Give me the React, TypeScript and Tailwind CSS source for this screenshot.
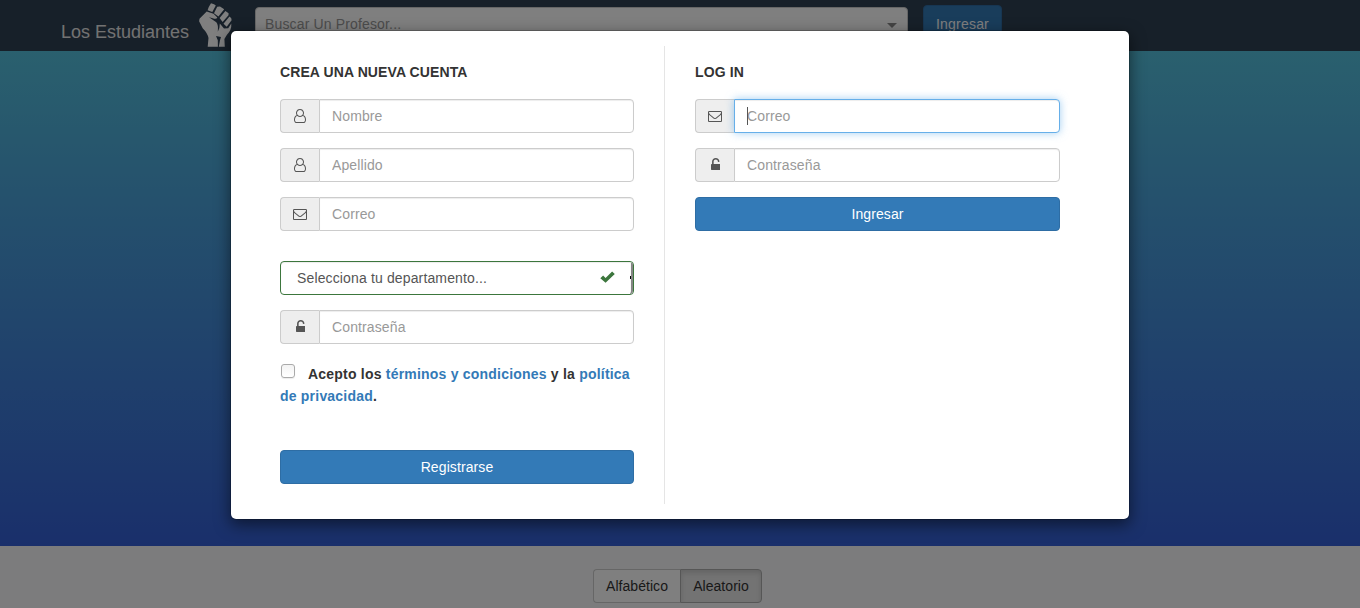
import React from "react";

const USER_PATH =
  "M1201 784q47 14 89.5 38t89 73 79.5 115.5 55 172 22 236.5q0 154-100 263.5t-241 109.5h-854q-141 0-241-109.5t-100-263.5q0-131 22-236.5t55-172 79.5-115.5 89-73 89.5-38q-79-125-79-272 0-104 40.5-198.5t109.5-163.5 163.5-109.5 198.5-40.5 198.5 40.5 163.5 109.5 109.5 163.5 40.5 198.5q0 147-79 272zm-433-656q-159 0-271.5 112.5t-112.5 271.5 112.5 271.5 271.5 112.5 271.5-112.5 112.5-271.5-112.5-271.5-271.5-112.5zm427 1536q88 0 150.5-71.5t62.5-173.5q0-239-78.5-377t-225.5-145q-145 127-336 127t-336-127q-147 7-225.5 145t-78.5 377q0 102 62.5 173.5t150.5 71.5h854z";
const MAIL_PATH =
  "M1664 1504v-768q-32 36-69 66-268 206-426 338-51 43-83 67t-86.5 48.5-102.5 24.5h-2q-48 0-102.5-24.5t-86.5-48.5-83-67q-158-132-426-338-37-30-69-66v768q0 13 9.5 22.5t22.5 9.5h1472q13 0 22.5-9.5t9.5-22.5zm0-1051v-24.5l-.5-13-3-12.5-5.5-9-9-7.5-14-2.5h-1472q-13 0-22.5 9.5t-9.5 22.5q0 168 147 284 193 152 401 317 6 5 35 29.5t46 37.5 44.5 31.5 50.5 27.5 43 9h2q20 0 43-9t50.5-27.5 44.5-31.5 46-37.5 35-29.5q208-165 401-317 54-43 100.5-115.5t46.5-131.5zm128-37v1088q0 66-47 113t-113 47h-1472q-66 0-113-47t-47-113v-1088q0-66 47-113t113-47h1472q66 0 113 47t47 113z";
const LOCK_PATH =
  "M1376 896q40 0 68 28t28 68v576q0 40-28 68t-68 28h-960q-40 0-68-28t-28-68v-576q0-40 28-68t68-28h32v-320q0-185 131.5-316.5t316.5-131.5 316.5 131.5 131.5 316.5q0 26-19 45t-45 19h-64q-26 0-45-19t-19-45q0-106-75-181t-181-75-181 75-75 181v320h736z";

type IconName = "user" | "mail" | "lock";

function FieldIcon({ name }: { name: IconName }) {
  if (name === "user")
    return (
      <svg viewBox="0 0 1536 1792" className="h-[14px] w-3 fill-[#555]">
        <path d={USER_PATH} />
      </svg>
    );
  if (name === "mail")
    return (
      <svg viewBox="0 0 1792 1792" className="h-[14px] w-[14px] fill-[#555]">
        <path d={MAIL_PATH} />
      </svg>
    );
  return (
    <svg viewBox="320 128 1152 1536" preserveAspectRatio="none" className="mb-[2px] ml-px h-3 w-[9.5px] fill-[#555]">
      <path d={LOCK_PATH} />
    </svg>
  );
}

function Field({ icon, label, type = "text", active = false }: { icon: IconName; label: string; type?: string; active?: boolean }) {
  return (
    <div className="flex h-[34px]">
      <span className="flex w-[39px] shrink-0 items-center justify-center rounded-l-[4px] border border-r-0 border-[#ccc] bg-[#eee]">
        <FieldIcon name={icon} />
      </span>
      <div
        className={
          active
            ? "relative flex min-w-0 flex-1 items-center rounded-r-[4px] border border-[#66afe9] bg-white pl-3 shadow-[inset_0_1px_1px_rgba(0,0,0,0.075),0_0_8px_rgba(102,175,233,0.6)]"
            : "relative flex min-w-0 flex-1 items-center rounded-r-[4px] border border-[#ccc] bg-white pl-3 shadow-[inset_0_1px_1px_rgba(0,0,0,0.075)]"
        }
      >
        {active && <span className="absolute left-3 top-[7px] h-[18px] w-px bg-[#555]" />}
        <input type={type} placeholder={label} className="h-5 w-full min-w-0 bg-transparent leading-5 outline-none placeholder:text-[#999]" />
      </div>
    </div>
  );
}

function PrimaryButton({ children }: { children: React.ReactNode }) {
  return (
    <button className="h-[34px] w-full rounded-[4px] border border-[#2e6da4] bg-[#337ab7] text-center leading-5 tracking-[0.1px] text-white">
      {children}
    </button>
  );
}

function Fist() {
  return (
    <svg viewBox="0 0 50 50" className="h-[50px] w-[50px] shrink-0">
      <path
        fill="#fff"
        d="M21 3.2 24 4.3 25.8 5.4 22.3 12 17.6 10.3Q18.8 6.2 21 3.2ZM27.2 6.7 30 6.6 34.2 9.3 28.4 16.5 24 13.2ZM35.4 11 38.6 13.2 38.5 15.3 32.6 22 29.6 18ZM39.5 16.5Q42 18 41.6 20.2L36.7 26.8 33.5 23.7ZM16.7 11.5 23.5 13.8 27.3 17.5Q26.5 19.7 22.8 18.3L19 17.2 26.3 22.3Q28.5 24.5 27.8 31.7 30 27.5 29.8 23.4L34 28.4 38.2 28.2 41.3 23.5Q41.8 30 36.8 35L34.4 39 34.8 46.8H28.8L30 40.2 31 37.1 26 36 27.8 40.3 27.9 46.8H17.7L18.5 38Q17.5 33 12.7 28.2L9.1 21.2 9.5 18.7Z"
      />
    </svg>
  );
}

export default function App() {
  return (
    <div className="relative h-[608px] w-full overflow-hidden bg-[#f8f9fb] font-['Liberation_Sans',Arial,sans-serif] text-[14px] leading-5 text-[#333]">
      <header className="flex h-[51px] bg-[#2f4052] pl-[61px]">
        <span className="w-[129px] shrink-0 whitespace-nowrap pt-[22px] text-[18px] text-[#e4e4e4]">Los Estudiantes</span>
        <Fist />
        <div className="ml-[15px] mt-[7px] flex h-[34px] w-[653px] justify-between rounded-[4px] border border-[#ccc] bg-white px-[9px] pt-[6px] text-[#999]">
          <span className="tracking-[0.15px]">Buscar Un Profesor...</span>
          <span className="mr-px mt-[9px] h-0 w-0 border-x-[5px] border-t-[5px] border-x-transparent border-t-[#888]" />
        </div>
        <button className="ml-[15px] mt-[5px] h-[38px] w-[79px] rounded-[4px] border border-[#2e6da4] bg-[#337ab7] tracking-[0.2px] text-white">Ingresar</button>
      </header>
      <div className="h-[495px] bg-linear-to-b/srgb from-[#54c0dc] to-[#345fd6]" />
      <div className="flex justify-center pt-[23px]">
        <div className="flex h-[34px]">
          <button className="w-[87px] rounded-l-[4px] border border-r-0 border-[#ccc] bg-white tracking-[0.05px]">Alfabético</button>
          <button className="w-[82px] rounded-r-[4px] border border-[#adadad] bg-[#e6e6e6] tracking-[0.05px] shadow-[inset_0_3px_5px_rgba(0,0,0,0.125)]">Aleatorio</button>
        </div>
        <span className="w-[5px]" />
      </div>

      <div className="absolute inset-0 bg-black/50" />

      <div className="absolute left-[230px] top-[30px] flex h-[490px] w-[900px] rounded-[6px] border border-black/20 bg-white bg-clip-padding py-[15px] shadow-[0_5px_15px_rgba(0,0,0,0.5)]">
        <section className="w-[434px] border-r border-[#e5e5e5] pl-[49px] pr-[30px] pt-4">
          <h2 className="h-5 font-bold tracking-[0.1px]">CREA UNA NUEVA CUENTA</h2>
          <div className="mt-[17px] flex flex-col gap-[15px] tracking-[0.12px]">
            <Field icon="user" label="Nombre" />
            <Field icon="user" label="Apellido" />
            <Field icon="mail" label="Correo" />
          </div>
          <div className="relative mt-[30px] flex h-[34px] items-center overflow-hidden rounded-[4px] border border-[#3c763d] pl-4 text-[#555] shadow-[inset_0_1px_1px_rgba(0,0,0,0.075)]">
            <span className="tracking-[0.14px]">Selecciona tu departamento...</span>
            <svg viewBox="0 0 14 12" className="absolute left-[319px] top-[9px] h-3 w-[15px] fill-[#3c763d]" preserveAspectRatio="none">
              <path d="M0.3 7.2 2.9 4.6 5.2 6.9 11.3 0.6 13.8 3.1 5.2 11.8Z" />
            </svg>
            <span className="absolute right-0 top-[1px] h-[31px] w-[3px] rounded-br-[3px] border-r-2 border-b border-[#858585] bg-[#f8f8f8]" />
            <span className="absolute right-[2px] top-[14px] h-[3px] w-px bg-black" />
          </div>
          <div className="mt-[15px] tracking-[0.12px]">
            <Field icon="lock" label="Contraseña" type="password" />
          </div>
          <div className="mt-[19px] h-[65px] whitespace-nowrap font-bold leading-[22px] tracking-[0.21px]">
            <span className="relative -top-[2px] ml-px mr-[13px] inline-block h-[14px] w-[14px] rounded-[3px] border border-[#aaa] bg-linear-to-b from-[#f3f3f3] to-white align-[-1px] shadow-[0_1px_1px_rgba(0,0,0,0.08)]" />
            Acepto los <a className="text-[#337ab7]">términos y condiciones</a> y la <a className="text-[#337ab7]">política<br />de privacidad</a>.
          </div>
          <div className="mt-[22px]">
            <PrimaryButton>Registrarse</PrimaryButton>
          </div>
        </section>
        <section className="w-[395px] pl-[30px] pt-4">
          <h2 className="h-5 font-bold tracking-[0.15px]">LOG IN</h2>
          <div className="mt-[17px] flex flex-col gap-[15px] tracking-[0.12px]">
            <Field icon="mail" label="Correo" active />
            <Field icon="lock" label="Contraseña" type="password" />
            <PrimaryButton>Ingresar</PrimaryButton>
          </div>
        </section>
      </div>
    </div>
  );
}
